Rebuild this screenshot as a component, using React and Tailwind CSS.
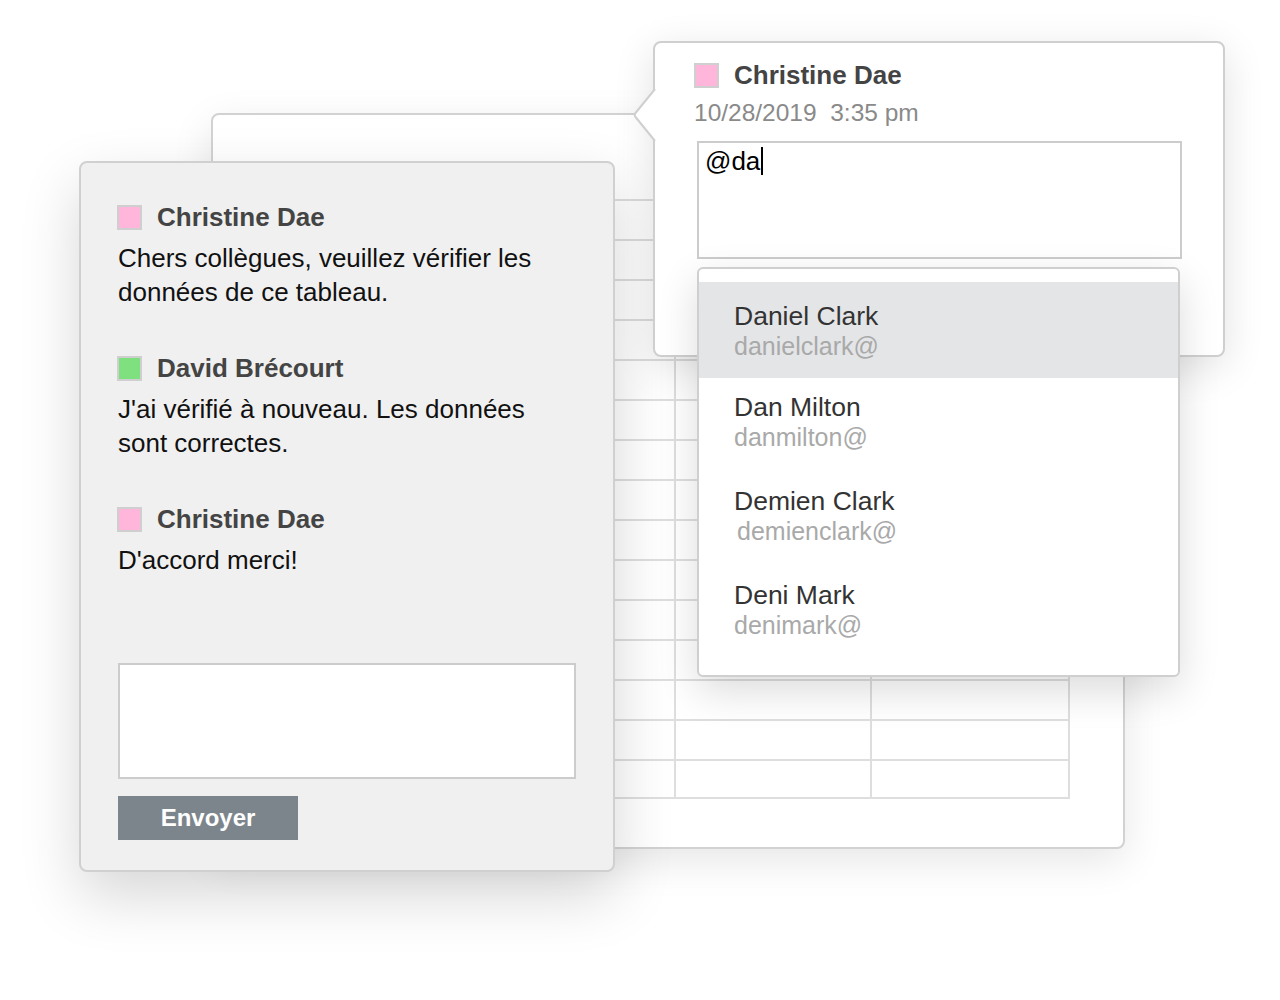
import React from "react";

const comments = [
  { name: "Christine Dae", color: "bg-[#ffb6da]", text: ["Chers collègues, veuillez vérifier les", "données de ce tableau."] },
  { name: "David Brécourt", color: "bg-[#7ee07e]", text: ["J'ai vérifié à nouveau. Les données", "sont correctes."] },
  { name: "Christine Dae", color: "bg-[#ffb6da]", text: ["D'accord merci!"] },
];

const people = [
  { name: "Daniel Clark", mail: "danielclark@", active: true },
  { name: "Dan Milton", mail: "danmilton@" },
  { name: "Demien Clark", mail: "demienclark@", shift: true },
  { name: "Deni Mark", mail: "denimark@" },
];

const rows = Array.from({ length: 15 }, (_, i) => i);

function Swatch({ color }) {
  return <span className={`block w-[25px] h-[25px] border-2 border-[#cfcfcf] ${color}`} />;
}

// feuille de calcul en arrière-plan
function Sheet() {
  return (
    <div className="absolute left-[211px] top-[113px] w-[914px] h-[736px] bg-white border-2 border-[#d2d2d2] rounded-lg shadow-[0_12px_40px_rgba(0,0,0,0.10)] pl-[40px] pt-[84px]">
      <div className="w-[817px] border-t-2 border-l-2 border-[#dedede]">
        {rows.map((r) => (
          <div key={r} className={`grid grid-cols-[221px_200px_196px_198px] ${r === 14 ? "h-[38px]" : "h-[40px]"}`}>
            <div className="border-r-2 border-b-2 border-[#dedede]" />
            <div className="border-r-2 border-b-2 border-[#dedede]" />
            <div className="border-r-2 border-b-2 border-[#dedede]" />
            <div className="border-r-2 border-b-2 border-[#dedede]" />
          </div>
        ))}
      </div>
    </div>
  );
}

function CommentPanel() {
  return (
    <div className="absolute left-[79px] top-[161px] w-[536px] h-[711px] bg-[#f0f0f0] border-2 border-[#d0d0d0] rounded-lg shadow-[0_24px_60px_rgba(0,0,0,0.16)] flex flex-col pl-[36px] pt-[39px] pb-[30px]">
      <div className="flex flex-col gap-[44px]">
        {comments.map((c, i) => (
          <div key={i}>
            <div className="h-[30px] flex items-center gap-[15px]">
              <Swatch color={c.color} />
              <span className="text-[26px] font-bold text-[#444444] leading-[30px]">{c.name}</span>
            </div>
            <div className="mt-[9px] text-[26px] leading-[34px] text-[#111111] pl-px">
              {c.text.map((t, j) => (
                <div key={j}>{t}</div>
              ))}
            </div>
          </div>
        ))}
      </div>
      <div className="mt-auto pl-px">
        <div className="w-[458px] h-[116px] bg-white border-2 border-[#cccccc]" />
        <button className="mt-[17px] w-[180px] h-[44px] bg-[#7d858c] text-white text-[24px] font-bold leading-none">
          Envoyer
        </button>
      </div>
    </div>
  );
}

function Popup() {
  return (
    <div className="absolute left-[653px] top-[41px] w-[572px] h-[316px] bg-white border-2 border-[#cfcfcf] rounded-lg shadow-[0_10px_40px_rgba(0,0,0,0.12)] pl-[39px] pt-[17px]">
      <svg className="absolute left-[-23px] top-[46px]" width="28" height="52" viewBox="0 0 28 52">
        <polygon points="23,0 2,26 23,52 27,52 27,0" fill="#ffffff" />
        <path d="M23 0 L3.5 24 Q2 26 3.5 28 L23 52" fill="none" stroke="#cfcfcf" strokeWidth="2" strokeLinejoin="round" />
      </svg>
      <div className="h-[30px] flex items-center gap-[15px]">
        <Swatch color="bg-[#ffb6da]" />
        <span className="text-[26px] font-bold text-[#444444] leading-[30px]">Christine Dae</span>
      </div>
      <div className="mt-[8px] text-[24.5px] leading-[30px] text-[#8a8a8a]">10/28/2019&nbsp;&nbsp;3:35 pm</div>
      <div className="mt-[13px] ml-[3px] w-[485px] h-[118px] border-2 border-[#cccccc] bg-white pl-[6px] pt-[3px]">
        <div className="flex items-center text-[26px] leading-[30px] text-black">
          <span>@da</span>
          <span className="ml-px w-[2px] h-[28px] bg-black" />
        </div>
      </div>
    </div>
  );
}

function Mentions() {
  return (
    <div className="absolute left-[697px] top-[267px] w-[483px] h-[410px] bg-white border-2 border-[#cfcfcf] rounded-md shadow-[0_14px_40px_rgba(0,0,0,0.14)] pt-[13px]">
      {people.map((p) => (
        <div
          key={p.name}
          className={p.active ? "bg-[#e4e5e7] pl-[35px] pt-[19px] pb-[17px]" : "pl-[35px] pt-[14px] pb-[20px]"}
        >
          <div className="text-[26.5px] leading-[30px] text-[#333333]">{p.name}</div>
          <div className={`text-[25px] leading-[30px] text-[#a9a9a9] ${p.shift ? "ml-[3px]" : ""}`}>{p.mail}</div>
        </div>
      ))}
    </div>
  );
}

export default function App() {
  return (
    <div className="relative w-[1280px] h-[1000px] overflow-hidden bg-white font-['Liberation_Sans',Arial,sans-serif]">
      <Sheet />
      <CommentPanel />
      <Popup />
      <Mentions />
    </div>
  );
}
